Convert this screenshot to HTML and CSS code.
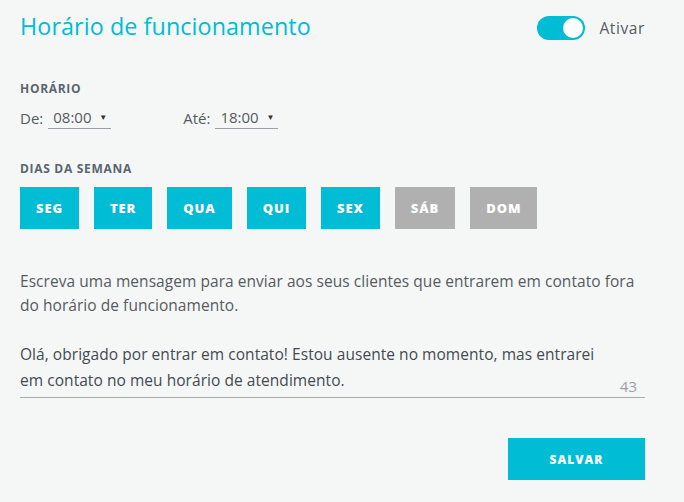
FILE: index.html
```html
<!DOCTYPE html>
<html lang="pt">
<head>
<meta charset="utf-8">
<link rel="stylesheet" href="styles.css">
</head>
<body>
<div class="panel">
  <div class="header">
    <h1 class="title">Horário de funcionamento</h1>
    <div class="toggle-wrap">
      <span class="toggle"><span class="thumb"></span></span>
      <span class="toggle-label">Ativar</span>
    </div>
  </div>

  <div class="section-label">HORÁRIO</div>
  <div class="time-row">
    <div class="time-field">
      <span class="time-label">De:</span>
      <span class="select"><span class="select-value">08:00</span><span class="caret">▼</span></span>
    </div>
    <div class="time-field">
      <span class="time-label">Até:</span>
      <span class="select"><span class="select-value">18:00</span><span class="caret">▼</span></span>
    </div>
  </div>

  <div class="section-label days-label">DIAS DA SEMANA</div>
  <div class="days">
    <span class="day on">SEG</span>
    <span class="day on">TER</span>
    <span class="day on">QUA</span>
    <span class="day on">QUI</span>
    <span class="day on">SEX</span>
    <span class="day off">SÁB</span>
    <span class="day off">DOM</span>
  </div>

  <p class="hint">Escreva uma mensagem para enviar aos seus clientes que entrarem em contato fora do horário de funcionamento.</p>

  <div class="message">
    <p class="message-text">Olá, obrigado por entrar em contato! Estou ausente no momento, mas entrarei em contato no meu horário de atendimento.</p>
    <span class="counter">43</span>
  </div>

  <div class="actions">
    <button class="save">SALVAR</button>
  </div>
</div>
</body>
</html>
```

FILE: styles.css
```css
html, body {
  margin: 0;
  padding: 0;
  background: #f5f7f7;
}
body {
  font-family: "Open Sans", "Liberation Sans", sans-serif;
  color: #555b60;
}
.panel {
  width: 625px;
  padding: 7px 39px 0 20px;
}
.header {
  display: flex;
  align-items: center;
  justify-content: space-between;
  height: 38px;
}
.title {
  margin: 0;
  font-family: "Open Sans", sans-serif;
  font-weight: 400;
  font-size: 23.3px;
  color: #00bcd4;
  letter-spacing: 0.1px;
}
.toggle-wrap {
  display: flex;
  align-items: center;
  gap: 14px;
  margin-top: 3px;
}
.toggle {
  width: 48px;
  height: 24px;
  border-radius: 12px;
  background: #00bcd4;
  display: flex;
  align-items: center;
  justify-content: flex-end;
  padding: 0 2px;
  box-sizing: border-box;
}
.thumb {
  width: 20px;
  height: 20px;
  border-radius: 50%;
  background: #fff;
}
.toggle-label {
  font-size: 15.5px;
  color: #555b60;
  letter-spacing: 0.6px;
}
.section-label {
  font-size: 12px;
  font-weight: 700;
  color: #5a6570;
  letter-spacing: 0.7px;
  margin-top: 36px;
  line-height: 16px;
}
.time-row {
  display: flex;
  gap: 72px;
  margin-top: 10px;
}
.time-field {
  display: flex;
  align-items: center;
  gap: 5px;
  font-size: 15px;
}
.select {
  display: flex;
  align-items: center;
  border-bottom: 1px solid #9aa0a4;
  padding: 0 4px 1px 5px;
  width: 54px;
  justify-content: space-between;
  line-height: 20px;
}
.caret {
  font-size: 8px;
  color: #333;
}
.days-label {
  margin-top: 32px;
}
.days {
  display: flex;
  gap: 15px;
  margin-top: 10px;
}
.day {
  height: 42px;
  padding: 0 16px;
  display: flex;
  align-items: center;
  font-size: 13px;
  font-weight: 800;
  color: #fff;
  letter-spacing: 0.9px;
}
.day.on { background: #00bcd4; }
.day.off { background: #b0b0b0; }
.hint {
  margin: 40px 0 0;
  font-size: 15.5px;
  line-height: 24px;
  letter-spacing: 0.05px;
  color: #555b60;
}
.message {
  position: relative;
  margin-top: 24px;
  border-bottom: 1px solid #a8adb0;
  padding-bottom: 4px;
}
.message-text {
  margin: 0;
  font-size: 15.5px;
  line-height: 26px;
  letter-spacing: 0.05px;
  width: 600px;
  color: #444a50;
}
.counter {
  position: absolute;
  right: 8px;
  bottom: 1px;
  font-size: 15px;
  color: #a0a0a0;
}
.actions {
  display: flex;
  justify-content: flex-end;
  margin-top: 40px;
}
.save {
  width: 137px;
  height: 42px;
  border: 0;
  background: #00bcd4;
  color: #fff;
  font-family: "Open Sans", sans-serif;
  font-size: 12px;
  font-weight: 800;
  letter-spacing: 1px;
}
```
